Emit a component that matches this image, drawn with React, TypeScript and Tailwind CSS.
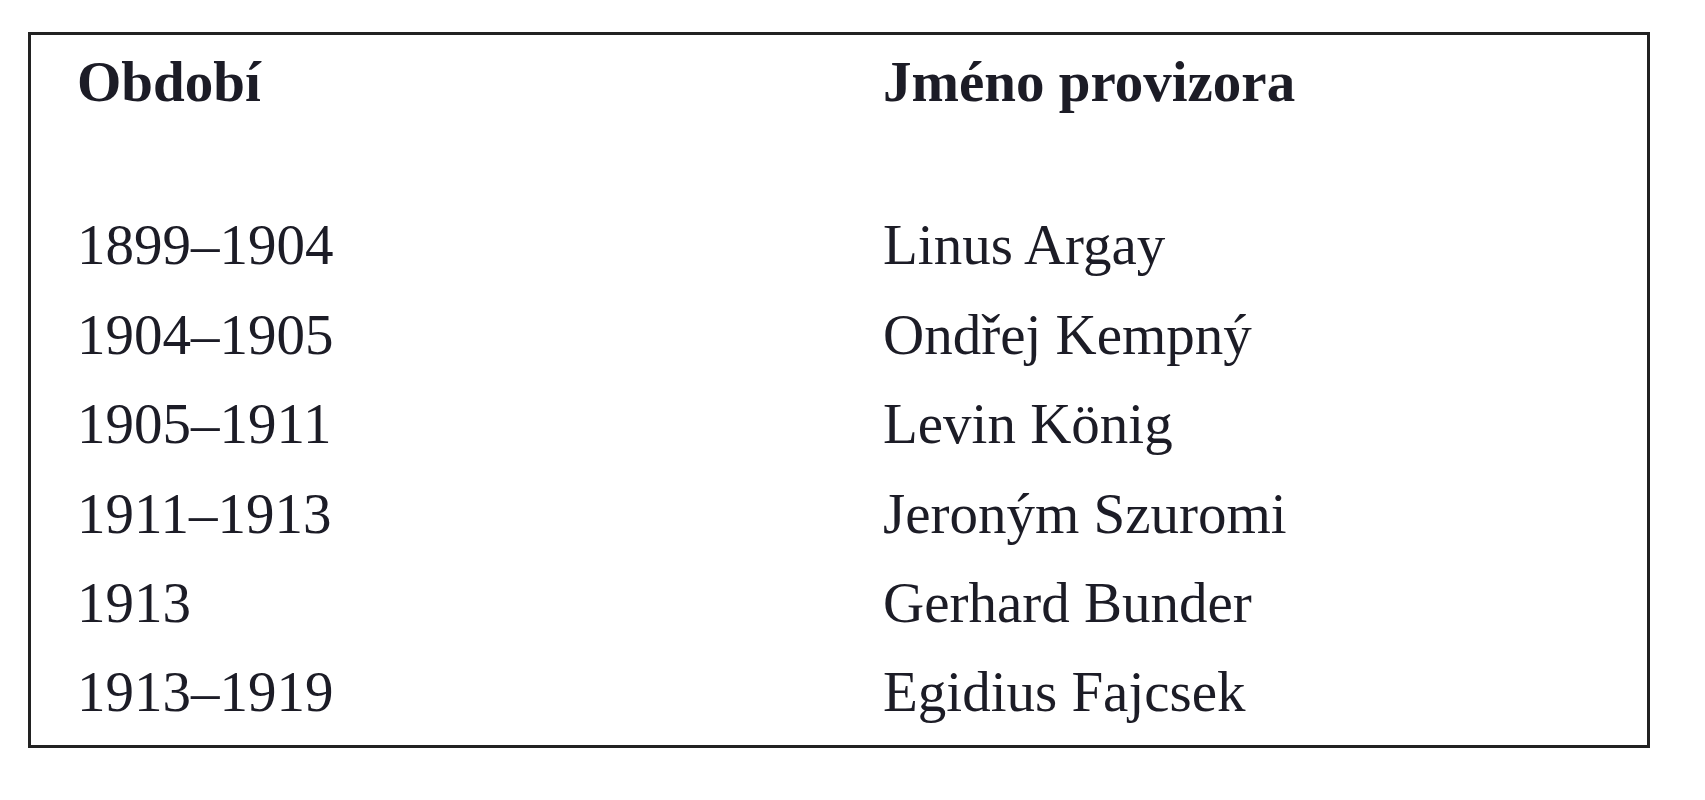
import React from "react";

const rows: [string, string][] = [
  ["1899–1904", "Linus Argay"],
  ["1904–1905", "Ondřej Kempný"],
  ["1905–1911", "Levin König"],
  ["1911–1913", "Jeroným Szuromi"],
  ["1913", "Gerhard Bunder"],
  ["1913–1919", "Egidius Fajcsek"],
];

export default function App() {
  return (
    <div className="w-[1705px] h-[800px] bg-white overflow-hidden pt-[32px] pl-[28px]">
      <div
        className="w-[1622px] h-[716px] border-[3px] border-[#222222] pt-[2px] pl-[46px] text-[57px] text-[#1c1c26]"
        style={{ fontFamily: '"Liberation Serif", "Times New Roman", serif' }}
      >
        <div className="grid grid-cols-[806px_1fr] leading-[89.4px] font-bold">
          <div>Období</div>
          <div>Jméno provizora</div>
        </div>
        <div className="mt-[74px] flex flex-col">
          {rows.map(([period, name]) => (
            <div key={period + name} className="grid grid-cols-[806px_1fr] leading-[89.4px]">
              <div>{period}</div>
              <div>{name}</div>
            </div>
          ))}
        </div>
      </div>
    </div>
  );
}
